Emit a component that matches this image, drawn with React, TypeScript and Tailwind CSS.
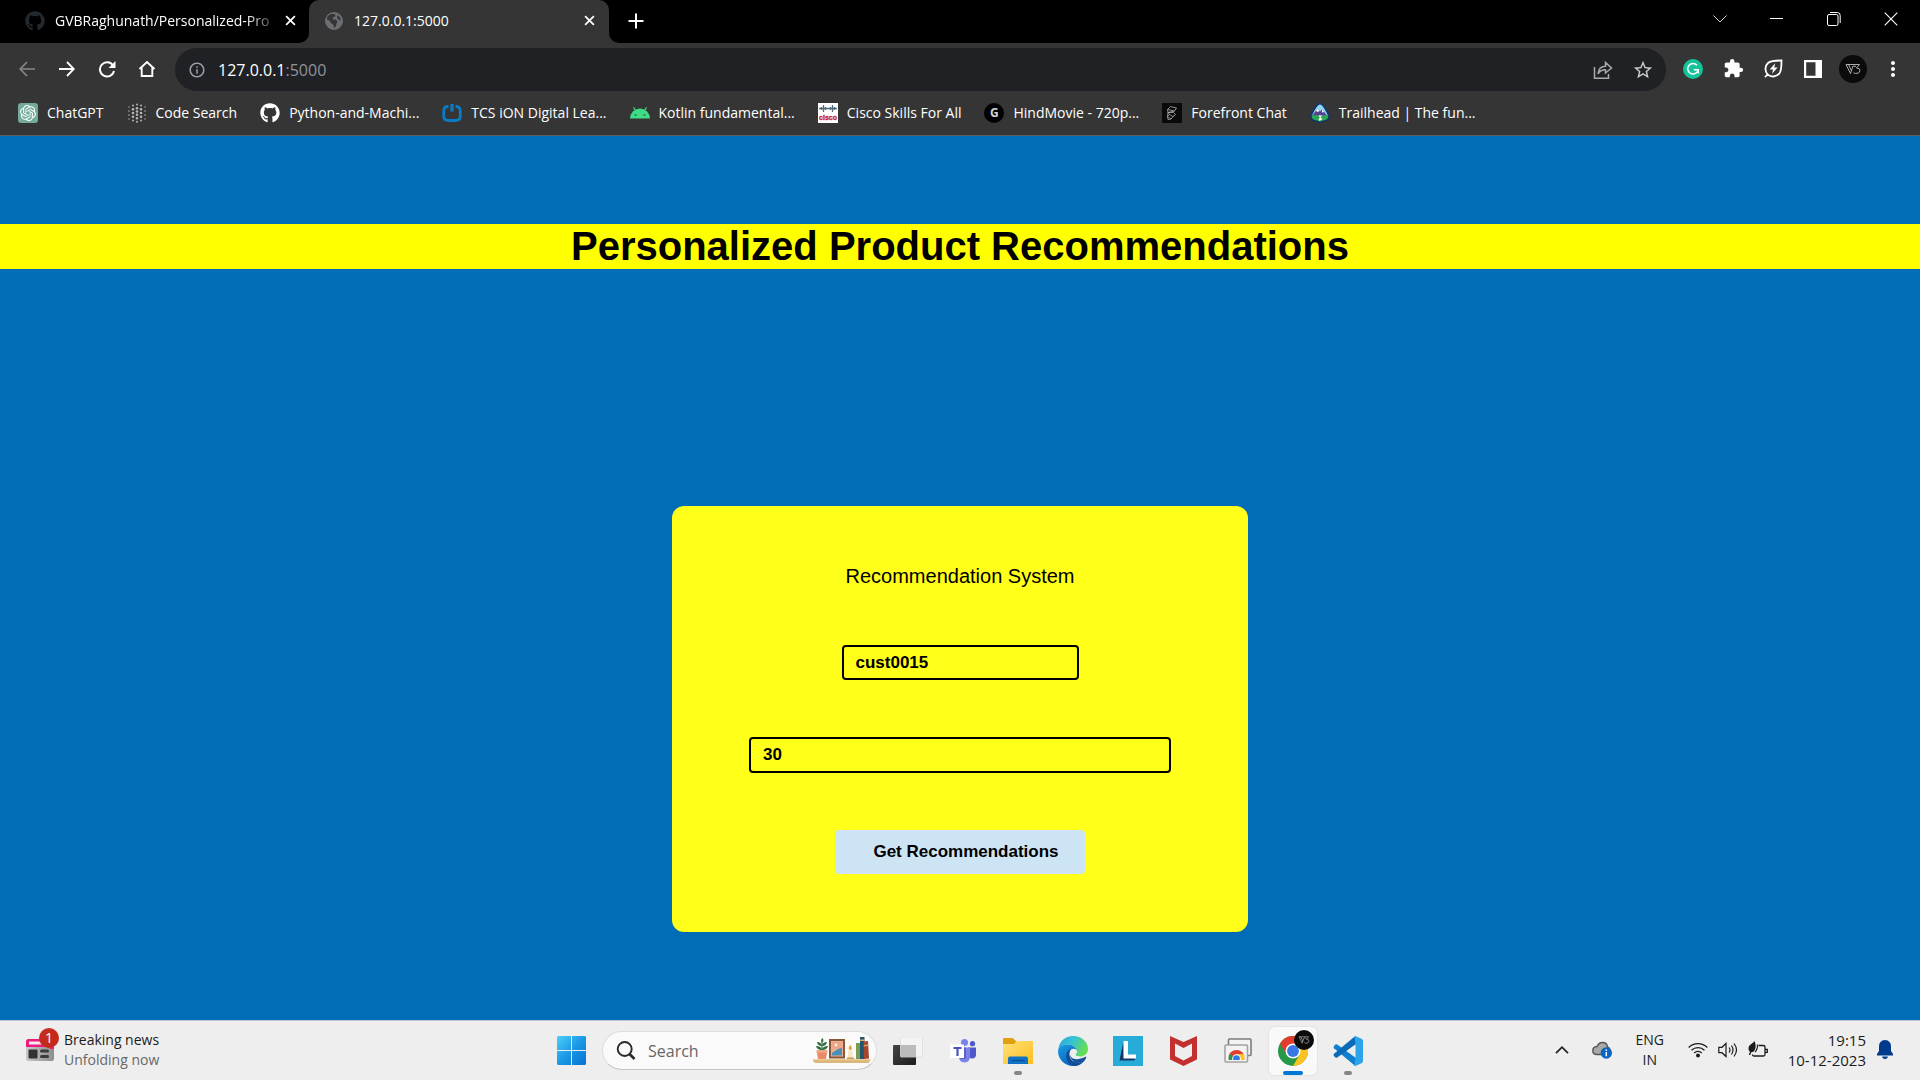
import type { ReactNode } from "react";
import { FaGithub } from "react-icons/fa";
import { SiOpenai } from "react-icons/si";
import { MdExtension, MdInfoOutline, MdStarBorder, MdMoreVert } from "react-icons/md";

const UI = "font-['Open_Sans','Noto_Sans',sans-serif]";

function Globe() {
  return (
    <svg viewBox="0 0 18 18" className="size-[18px] shrink-0" aria-hidden="true">
      <circle cx="9" cy="9" r="9" fill="#6b6f73" />
      <path d="M2 5.500C3 3.500 5 2 7.500 1.800L10.500 2.500 10 4.500 8 5.500 7.500 7.500H11L12.500 9.500 11.500 11.500 11 14 9 16.200 8.500 13 6 11 4.500 8.500 2 7.500zM12.500 3 15 5.500 16 8.500 14 8 12 6z" fill="#353535" />
    </svg>
  );
}

function CloseX({ className }: { className: string }) {
  return (
    <svg viewBox="0 0 10 10" className={className} aria-hidden="true">
      <path d="M1 1 9 9M9 1 1 9" stroke="currentColor" strokeWidth="1.6" fill="none" />
    </svg>
  );
}

function TabStrip() {
  return (
    <div className="flex h-[43px] bg-black text-white">
      <div className="flex w-[309px] items-center pb-0.5 pl-[25px] pr-[9px]">
        <FaGithub className="size-5 shrink-0 text-[#24292e]" aria-hidden="true" />
        <span className="ml-[10px] flex-1 whitespace-nowrap text-sm [mask-image:linear-gradient(to_right,black_85%,transparent)]">
          GVBRaghunath/Personalized-Pro
        </span>
        <button aria-label="Close tab" className="flex size-5 shrink-0 items-center justify-center">
          <CloseX className="size-[11px]" />
        </button>
      </div>
      <div className="relative flex w-[300px] items-center rounded-t-[10px] bg-[#353535] pb-0.5 pl-4 pr-[10px]">
        <svg viewBox="0 0 10 10" className="absolute -left-[10px] bottom-0 size-[10px]" aria-hidden="true">
          <path d="M10 0V10H0A10 10 0 0 0 10 0z" fill="#353535" />
        </svg>
        <svg viewBox="0 0 10 10" className="absolute -right-[10px] bottom-0 size-[10px]" aria-hidden="true">
          <path d="M0 0V10H10A10 10 0 0 1 0 0z" fill="#353535" />
        </svg>
        <Globe />
        <span className="ml-[11px] flex-1 text-sm">127.0.0.1:5000</span>
        <button aria-label="Close tab" className="flex size-5 items-center justify-center">
          <CloseX className="size-[11px]" />
        </button>
      </div>
      <button aria-label="New tab" className="ml-3 flex w-[30px] items-center justify-center pb-0.5">
        <svg viewBox="0 0 16 16" className="size-4" aria-hidden="true">
          <path d="M8 .5v15M.5 8h15" stroke="white" strokeWidth="2" />
        </svg>
      </button>
      <div className="ml-auto flex h-[37px] pr-px">
        <button aria-label="Search tabs" className="flex w-[57px] items-center justify-center">
          <svg viewBox="0 0 14 8" className="h-2 w-[14px]" aria-hidden="true">
            <path d="M.5.500 7 7 13.500.500" stroke="#d0d0d0" fill="none" />
          </svg>
        </button>
        <button aria-label="Minimize" className="flex w-[57px] items-center justify-center">
          <span className="h-px w-[13px] bg-white" />
        </button>
        <button aria-label="Restore" className="flex w-[57px] items-center justify-center">
          <svg viewBox="0 0 14 14" className="size-[14px]" fill="none" stroke="white" aria-hidden="true">
            <rect x=".5" y="2.500" width="10.500" height="11" rx="1.500" />
            <path d="M3 .5H10.500Q13.200.500 13.200 3.500V11" />
          </svg>
        </button>
        <button aria-label="Close" className="flex w-[57px] items-center justify-center">
          <svg viewBox="0 0 14 14" className="size-[14px]" aria-hidden="true">
            <path d="M.7.7 13.300 13.300M13.300.7.7 13.300" stroke="white" strokeWidth="1.1" />
          </svg>
        </button>
      </div>
    </div>
  );
}

function ToolButton({ label, children }: { label: string; children: ReactNode }) {
  return (
    <button aria-label={label} className="flex h-10 w-10 shrink-0 items-center justify-center text-white">
      {children}
    </button>
  );
}

function Monogram({ className }: { className: string }) {
  return (
    <svg viewBox="0 0 28 28" className={className} aria-hidden="true">
      <circle cx="14" cy="14" r="14" fill="#0b0b0b" />
      <path d="M7 9.500 11.500 18.500 14 11M9.500 9.500 12.300 15.500M7 9.500H20.500L17.500 13Q21.200 13 21 15.800 20.500 18.700 16.500 18.500L14.500 17.800M14 11 17 11.500" fill="none" stroke="#bdbdbd" strokeWidth=".9" />
    </svg>
  );
}

function Toolbar() {
  return (
    <div className="flex items-center pl-[7px] pr-[7px] pt-[5px]">
      <div className="flex pb-0.5">
        <ToolButton label="Back">
          <svg viewBox="0 0 16 16" className="size-4" fill="none" stroke="#868686" strokeWidth="1.700" aria-hidden="true">
            <path d="M16 8H1.500M8 1 1.200 8 8 15" />
          </svg>
        </ToolButton>
        <ToolButton label="Forward">
          <svg viewBox="0 0 16 16" className="size-4" fill="none" stroke="white" strokeWidth="1.800" aria-hidden="true">
            <path d="M0 8H14.500M8 1 14.800 8 8 15" />
          </svg>
        </ToolButton>
        <ToolButton label="Reload">
          <svg viewBox="0 0 18 18" className="size-[18px]" aria-hidden="true">
            <path d="M15 5.500A7.100 7.100 0 1 0 16 11" fill="none" stroke="white" strokeWidth="2" />
            <path d="M17.500 1V8H10.500z" fill="white" />
          </svg>
        </ToolButton>
        <ToolButton label="Home">
          <svg viewBox="0 0 18 18" className="size-[18px]" fill="none" stroke="white" strokeWidth="1.900" aria-hidden="true">
            <path d="M1.500 9 9 2 16.500 9M3.700 7.500V16H14.300V7.500" />
          </svg>
        </ToolButton>
      </div>
      <div className="ml-2 flex h-[43px] flex-1 items-center rounded-full bg-[#202124] pl-[13px] pr-[3px]">
        <MdInfoOutline className="size-[18px] text-[#9aa0a6]" aria-hidden="true" />
        <span className="ml-3 flex-1 text-base text-white">
          127.0.0.1<span className="text-[#8f9499]">:5000</span>
        </span>
        <ToolButton label="Share this page">
          <svg viewBox="0 0 20 20" className="size-5" fill="none" stroke="#a8abae" strokeWidth="1.500" aria-hidden="true">
            <path d="M1.500 7V18.200H15.500V14M5 14C5.500 9 8.500 6.200 12.500 6.200V2.500L18.500 8 12.500 13V9.800C9 9.800 6.500 11 5 14z" />
          </svg>
        </ToolButton>
        <ToolButton label="Bookmark this tab">
          <MdStarBorder className="size-[22px] text-[#c8cacc]" />
        </ToolButton>
      </div>
      <div className="ml-[7px] flex pb-0.5">
        <ToolButton label="Grammarly">
          <svg viewBox="0 0 20 20" className="size-5" aria-hidden="true">
            <circle cx="10" cy="10" r="10" fill="#15c39a" />
            <path d="M14 6.200A5.300 5.300 0 1 0 14.800 12M10.800 10.700H15.200V14.500" fill="none" stroke="white" strokeWidth="1.500" />
          </svg>
        </ToolButton>
        <ToolButton label="Extensions">
          <MdExtension className="size-[21px]" />
        </ToolButton>
        <ToolButton label="Energy saver">
          <svg viewBox="0 0 20 20" className="size-[19px]" fill="none" stroke="white" strokeWidth="1.900" aria-hidden="true">
            <path d="M1 19 3.800 16.200C.5 12.500 1 7 4.500 4 7.500 1.500 13 1.600 18.400 1.600 18.400 7 18.600 12.500 16 15.500 12.800 19 7.500 19.500 3.800 16.200" />
            <path d="M11.800 4.500 6 11H9.500L8.500 15.500 14.300 9H10.800z" fill="white" stroke="none" />
          </svg>
        </ToolButton>
        <ToolButton label="Side panel">
          <svg viewBox="0 0 18 18" className="size-[18px]" aria-hidden="true">
            <path d="M0 0H18V18H0zM2.200 2.200V15.800H11.500V2.200z" fill="white" fillRule="evenodd" />
          </svg>
        </ToolButton>
        <ToolButton label="Profile">
          <Monogram className="size-7" />
        </ToolButton>
        <ToolButton label="Menu">
          <MdMoreVert className="size-6" />
        </ToolButton>
      </div>
    </div>
  );
}

const DOTS = [
  [10, 1.5, 1], [6, 2.5, 1], [14, 2.5, 1], [2, 4, 0.7], [18, 4, 0.7], [10, 5.2, 1.3], [6, 6.2, 1.3], [14, 6.2, 1.3],
  [2, 8, 0.8], [18, 8, 0.8], [10, 8.5, 1.3], [6, 10, 1.3], [14, 10, 1.3], [2, 12, 0.8], [18, 12, 0.8], [10, 11.8, 1.3],
  [6, 13.8, 1.3], [14, 13.8, 1.3], [2, 16, 0.7], [18, 16, 0.7], [10, 15.2, 1.2], [6, 17.5, 1], [14, 17.5, 1], [10, 18.7, 1],
];

const BOOKMARKS: { label: string; icon: ReactNode }[] = [
  {
    label: "ChatGPT",
    icon: (
      <span className="flex size-5 items-center justify-center rounded-[3px] bg-[#74aa9c]">
        <SiOpenai className="size-4 text-white" />
      </span>
    ),
  },
  {
    label: "Code Search",
    icon: (
      <svg viewBox="0 0 20 20" className="size-5" fill="#b5b5b5">
        {DOTS.map(([x, y, r]) => (
          <circle key={`${x}-${y}`} cx={x} cy={y} r={r} />
        ))}
      </svg>
    ),
  },
  { label: "Python-and-Machi...", icon: <FaGithub className="size-5 text-white" /> },
  {
    label: "TCS iON Digital Lea...",
    icon: (
      <svg viewBox="0 0 20 20" className="size-5" fill="none" stroke="#0a7ac4" strokeWidth="2.800">
        <path d="M6.500 3.500H5.500Q1.700 4 1.700 8V13Q1.700 17.500 6.500 17.500H13.500Q18.300 17.500 18.300 13V8Q18.300 4 14.500 3.500H13.500" />
        <path d="M10 1V8.500" strokeWidth="3.200" />
      </svg>
    ),
  },
  {
    label: "Kotlin fundamental...",
    icon: (
      <svg viewBox="0 0 20 20" className="size-5">
        <path d="M0 15.500A10 10 0 0 1 20 15.500z" fill="#3ddc84" />
        <path d="M3.500 4.200 6 8.500M16.500 4.200 14 8.500" stroke="#3ddc84" strokeWidth="1.200" />
        <circle cx="5.500" cy="12" r="1" fill="#2b6b48" />
        <circle cx="14.500" cy="12" r="1" fill="#2b6b48" />
      </svg>
    ),
  },
  {
    label: "Cisco Skills For All",
    icon: (
      <svg viewBox="0 0 20 20" className="size-5 bg-white">
        <path d="M1 5.500H19M3.500 4V7M5.500 2V9M7.500 4V7M12.500 4V7M14.500 2V9M16.500 4V7" stroke="#4f6b78" strokeWidth="1.300" />
        <text x="10" y="17" textAnchor="middle" fontSize="7" fontWeight="bold" fill="#c4202f" stroke="#c4202f" strokeWidth=".3" fontFamily="Liberation Sans">cisco</text>
      </svg>
    ),
  },
  {
    label: "HindMovie - 720p...",
    icon: (
      <span className="flex size-5 items-center justify-center rounded-full bg-black text-xs font-bold text-[#d5d5d5]">G</span>
    ),
  },
  {
    label: "Forefront Chat",
    icon: (
      <svg viewBox="0 0 20 20" className="size-5">
        <path d="M0 0H20V20H0z" fill="#0a0a0a" />
        <path d="M5.500 6.500 8.500 3.500 14.500 5 12.500 8 8 7zM5.500 6.500 6 9.500 12.500 8M6 9.500 11.500 9.500 13.500 11.500 11 13.500 7.500 11.500zM6 9.500 5.500 13.500 9 16 11 13.500M5.500 13.500 7.500 11.500M9 16 6 16.500 5.500 13.500" fill="none" stroke="#b0b0b0" strokeWidth=".8" />
      </svg>
    ),
  },
  {
    label: "Trailhead | The fun...",
    icon: (
      <svg viewBox="0 0 20 20" className="size-5">
        <path d="M10 0C12.500 .3 13.800 2 15.500 4.500L19.300 11C20.800 14.500 19.500 16.800 17 17.800L10 20 3 17.800C.5 16.800-.8 14.500 .7 11L4.500 4.500C6.200 2 7.500 .3 10 0z" fill="#10346b" />
        <path d="M10 1.600C12.500 2 14 5 18 12.500H2C6 5 7.500 2 10 1.600z" fill="#8fd3f5" />
        <path d="M2.500 12.500 7.500 5.500 10 8.500 12 6.500 17 12.500z" fill="#5a3f90" />
        <path d="M7.500 5.500 9.200 8 7.800 9 6 8zM12 6.500 14 9 12 9.500z" fill="white" />
        <path d="M1.500 12.500H18.500Q18.500 15.500 16.500 16.500L10 18.500 3.500 16.500Q1.500 15.500 1.500 12.500z" fill="#2aa84f" />
        <path d="M8.500 12.500H12L10.500 14.500 12.500 16 9.500 18 8.500 16 10 15z" fill="white" />
      </svg>
    ),
  },
];

function BookmarkBar() {
  return (
    <nav aria-label="Bookmarks" className="flex h-11 items-center gap-[23px] pl-[18px] text-sm text-white">
      {BOOKMARKS.map((b) => (
        <a key={b.label} href="#" className="flex items-center gap-[9px] whitespace-nowrap">
          <span className="flex size-5 shrink-0" aria-hidden="true">{b.icon}</span>
          {b.label}
        </a>
      ))}
    </nav>
  );
}

function RecommendationPage() {
  return (
    <main className="flex flex-1 flex-col bg-[#006db6] pt-[88px] font-['Liberation_Sans',Arial,sans-serif] text-black">
      <h1 className="bg-[#ffff00] text-center text-[40px] font-bold leading-[45px]">Personalized Product Recommendations</h1>
      <form
        className="mx-auto mb-[88px] mt-auto flex w-[30%] flex-col items-center gap-[57px] rounded-xl bg-[#ffff1a] px-[77px] pb-[58px] pt-[58px]"
        onSubmit={(e) => e.preventDefault()}
      >
        <h2 className="text-xl leading-6">Recommendation System</h2>
        <input
          aria-label="Customer ID"
          type="text"
          defaultValue="cust0015"
          className="h-[35px] w-[237px] rounded border-2 border-black bg-transparent px-3 text-[17px] font-bold"
        />
        <input
          aria-label="Number of recommendations"
          type="text"
          defaultValue="30"
          className="h-9 w-full rounded border-2 border-black bg-transparent px-3 text-[17px] font-bold"
        />
        <button type="submit" className="h-11 whitespace-nowrap rounded bg-[#cde4f4] pl-[38px] pr-[26px] text-[17px] font-bold">
          Get Recommendations
        </button>
      </form>
    </main>
  );
}

function TaskButton({ label, active, running, children }: { label: string; active?: boolean; running?: boolean; children: ReactNode }) {
  return (
    <button
      aria-label={label}
      className={`relative flex size-12 shrink-0 items-center justify-center rounded-md ${active ? "bg-[#f9f9f9] shadow-[0_0_1px_1px_#e4e4e4]" : ""}`}
    >
      {children}
      {running && <span className="absolute bottom-0 h-1 w-2 rounded-full bg-[#868686]" />}
      {active && <span className="absolute bottom-0 h-1 w-5 rounded-full bg-[#0078d4]" />}
    </button>
  );
}

function Shelf() {
  return (
    <svg viewBox="0 0 60 28" className="h-7 w-[60px] shrink-0" aria-hidden="true">
      <path d="M1 22H59L57 25.500Q56.500 26 55 26H4Q1 26 1 22z" fill="#dcb67a" />
      <path d="M1 22H59L58.300 23.300H1.200z" fill="#edcd97" />
      <path d="M10 14V4" stroke="#2c5b34" strokeWidth="1" />
      <path d="M10 13C6 13 4.500 11 4 9 7.500 9 9.500 10 10 13zM10 13C14 13 15.500 11 16 9 12.500 9 10.500 10 10 13zM10 9C6.500 9 5.500 7 5 5 8 5 9.500 6 10 9zM10 9C13.500 9 14.500 7 15 5 12 5 10.500 6 10 9zM10 5.500C8.500 4 9 2 10.500 1 12 3 11.500 4.500 10 5.500z" fill="#2f7040" />
      <path d="M5 13.500H15V16L14 22H6L5 16z" fill="#e98a6b" />
      <path d="M4.500 13.200H15.500V16H4.500z" fill="#f4a183" />
      <path d="M17 2H33V21.500H17z" fill="#8c5736" />
      <path d="M19 4H31V19.500H19z" fill="#e8b08f" />
      <path d="M20 5H30V12H20z" fill="#f0a58a" />
      <path d="M20 18.500V16L26 12 30 11V18.500z" fill="#4a8fb5" />
      <circle cx="24" cy="8" r="1.400" fill="#fff3c8" />
      <path d="M36 13.500H40.500V22H36z" fill="#f6e7c5" />
      <path d="M35 20.500H42V22H35z" fill="#c99a55" />
      <path d="M38.200 8C40.500 10.500 40 13 38.300 13 36.500 13 36.200 10.500 38.200 8z" fill="#f59b23" />
      <path d="M44 6H48.500V22H44z" fill="#7b9a55" />
      <path d="M48 0H52.500V22H48z" fill="#1f5670" />
      <path d="M48 2.500H52.500V4H48z" fill="#e0b060" />
      <path d="M51.500 4.500 56 4 57 21.500 52 22z" fill="#a8452f" />
      <path d="M51.700 8 56 7.500V9L51.800 9.500z" fill="#e0a060" />
    </svg>
  );
}

function ChromeLogo({ className }: { className: string }) {
  return (
    <svg viewBox="0 0 48 48" className={className} aria-hidden="true">
      <circle cx="24" cy="24" r="24" fill="#279847" />
      <path d="M34.400 30 24 48A24 24 0 0 0 44.785 12H24z" fill="#fcc31f" />
      <path d="M13.600 30 3.215 12A24 24 0 0 1 44.785 12H24z" fill="#e33b2e" />
      <circle cx="24" cy="24" r="12" fill="white" />
      <circle cx="24" cy="24" r="9.500" fill="#3778e4" />
    </svg>
  );
}

function EdgeLogo() {
  return (
    <svg viewBox="0 0 30 30" className="size-[30px]" aria-hidden="true">
      <defs>
        <linearGradient id="edge-top" x1="0" y1="0" x2="1" y2=".4">
          <stop offset="0" stopColor="#2aa5e0" />
          <stop offset=".5" stopColor="#36c3d2" />
          <stop offset="1" stopColor="#66dd55" />
        </linearGradient>
        <linearGradient id="edge-left" x1="0" y1="0" x2=".6" y2="1">
          <stop offset="0" stopColor="#1b9de2" />
          <stop offset="1" stopColor="#0b63bf" />
        </linearGradient>
      </defs>
      <path d="M.4 13.500C1 5.500 7 0 15 0 24 0 30 6 30 13 30 18 26 20.500 22 20.500 19 20.500 17.200 19.500 17.500 18.500 18.500 17.300 18.800 16.500 18.800 15 18.500 11.500 14.500 8.500 9.500 8.500 5.500 8.500 2 10.500.4 13.500z" fill="url(#edge-top)" />
      <path d="M0 15C.5 11 5 8.300 9.500 8.500 14.500 8.700 18.600 11.500 18.800 15 17.500 12 13 12 11.500 16 10 21 14 28 19 29.300 10 32 0 25.500 0 15z" fill="url(#edge-left)" />
      <path d="M13 13C9.500 17 11 27 21 26.500 24 26.300 26 25 27.500 23.200 24.500 28 20 30 16 30 9 29 6.500 20 9.500 15.500 10.500 14 11.800 13.200 13 13z" fill="#114d94" />
      <path d="M11.700 18C13 23 18 25.500 28 20.500 28.500 21 28 22.500 27.500 23.200 24 28.500 13 29 11.700 18z" fill="#13529f" />
      <path d="M14.500 13.200Q18 12.500 18.800 15C18.800 16.500 18.500 17.300 17.500 18.500 17.200 19.500 19 20.500 22 20.500 17 22.500 11.500 18.500 12.300 15.300Q13 13.800 14.500 13.200z" fill="#ededed" />
    </svg>
  );
}

function Taskbar() {
  return (
    <footer className="grid h-[60px] grid-cols-[1fr_auto_1fr] items-center border-t border-[#b9c6d0] bg-[#eeeeee] text-[#1b1b1b]">
      <button className="ml-[26px] flex items-center gap-[10px] justify-self-start pb-0.5 text-left">
        <span className="relative">
          <svg viewBox="0 0 28 22" className="h-[22px] w-7" aria-hidden="true">
            <defs>
              <linearGradient id="news-body" x1="0" y1="0" x2="1" y2="0">
                <stop offset="0" stopColor="#c9c9c9" />
                <stop offset="1" stopColor="#8d8d8d" />
              </linearGradient>
            </defs>
            <rect width="28" height="22" rx="2.500" fill="url(#news-body)" />
            <path d="M0 8V2.500Q0 0 2.500 0H25.500Q28 0 28 2.500V10H24V8z" fill="#ee1d7d" />
            <rect x="3" y="2.500" width="16" height="3" fill="#f7e9f0" />
            <rect x="2.500" y="10.500" width="9" height="9" rx="1" fill="#333" />
            <rect x="14" y="10.500" width="9" height="3" rx="1.500" fill="#3a3a3a" />
            <rect x="14" y="16" width="9" height="3" rx="1.500" fill="#3a3a3a" />
          </svg>
          <span className="absolute -right-[5px] -top-[11px] flex size-5 items-center justify-center rounded-full bg-[#c42b1c] text-sm leading-none text-white">1</span>
        </span>
        <span className="flex flex-col text-sm leading-5">
          <span>Breaking news</span>
          <span className="text-[#686868]">Unfolding now</span>
        </span>
      </button>

      <div className="flex items-center gap-[7px] pr-px">
        <TaskButton label="Start">
          <svg viewBox="0 0 29 29" className="size-[29px]" aria-hidden="true">
            <defs>
              <linearGradient id="win" x1="0" y1="0" x2="1" y2="1">
                <stop offset="0" stopColor="#4bd0fb" />
                <stop offset=".5" stopColor="#1c98e6" />
                <stop offset="1" stopColor="#0672d0" />
              </linearGradient>
            </defs>
            <path d="M1 0H14V14H0V1zM15 0H28L29 1V14H15zM0 15H14V29H1L0 28zM15 15H29V28L28 29H15z" fill="url(#win)" />
          </svg>
        </TaskButton>
        <label className="flex h-[39px] w-[275px] items-center rounded-full border border-b-[#c4c4c4] border-[#dedede] bg-[#fafafa] pl-[13px] pr-1">
          <svg viewBox="0 0 20 20" className="size-5 shrink-0" fill="none" stroke="#2a2a2a" aria-hidden="true">
            <circle cx="8.700" cy="8" r="7" strokeWidth="1.900" />
            <path d="M13.500 13 18.500 18" strokeWidth="2.600" />
          </svg>
          <input type="text" aria-label="Search" placeholder="Search" className="ml-3 min-w-0 flex-1 bg-transparent text-base outline-none placeholder:text-[#666666]" />
          <Shelf />
        </label>
        <TaskButton label="Task view">
          <svg viewBox="0 0 30 28" className="h-7 w-[30px]" aria-hidden="true">
            <defs>
              <linearGradient id="tv" x1="0" y1="0" x2="1" y2="1">
                <stop offset="0" stopColor="#444" />
                <stop offset="1" stopColor="#1c1c1c" />
              </linearGradient>
            </defs>
            <rect y="8" width="23" height="20" rx="1" fill="url(#tv)" />
            <rect x="7.500" width="22" height="20" rx="1" fill="#f4f4f4" stroke="#dcdcdc" strokeWidth=".8" />
            <path d="M7.500 8H23V20H7.500z" fill="#bcbcbc" />
          </svg>
        </TaskButton>
        <TaskButton label="Teams">
          <svg viewBox="0 0 26 24" className="h-6 w-[26px]" aria-hidden="true">
            <circle cx="14.500" cy="3.500" r="3.500" fill="#7b83eb" />
            <circle cx="22.500" cy="4.700" r="2.600" fill="#5059c9" />
            <path d="M18 8.500H26V15.500Q26 19.500 22 19.500 19 19.500 18 17z" fill="#5059c9" />
            <path d="M9 8.500H20V17Q20 23.500 14.500 23.500 9 23.500 9 17z" fill="#7b83eb" />
            <path d="M9 8.500H16V20H9.800Q9 18 9 17z" fill="#5b62c2" />
            <path d="M0 5.500H14V19H0z" fill="white" />
            <path d="M3.500 8H11.500V10H8.600V17H6.400V10H3.500z" fill="#4b53bc" />
          </svg>
        </TaskButton>
        <TaskButton label="File Explorer" running>
          <svg viewBox="0 0 30 26" className="h-[26px] w-[30px]" aria-hidden="true">
            <defs>
              <linearGradient id="fold" x1="0" y1="0" x2="1" y2="1">
                <stop offset="0" stopColor="#ffe07a" />
                <stop offset="1" stopColor="#fcc01e" />
              </linearGradient>
            </defs>
            <path d="M0 1Q0 0 1 0H9.500L13 3H29Q30 3 30 4V10H0z" fill="#e0a010" />
            <path d="M0 6H11L13.500 3H30V26H0z" fill="url(#fold)" />
            <path d="M5 26V20.500Q5 18.500 7 18.500H23Q25 18.500 25 20.500V26z" fill="#0f72c4" />
            <path d="M8.500 22.500H21.500" stroke="#0a4f90" strokeWidth="1.200" />
          </svg>
        </TaskButton>
        <TaskButton label="Edge">
          <EdgeLogo />
        </TaskButton>
        <TaskButton label="L">
          <svg viewBox="0 0 30 30" className="size-[30px]" aria-hidden="true">
            <path d="M0 0H30V30H0z" fill="#27abd9" />
            <path d="M10.500 5 6.500 24.500H21L23 22.500 11 21z" fill="#14366b" />
            <path d="M10.500 5H15V18.500H23V22.500H10.500z" fill="white" />
          </svg>
        </TaskButton>
        <TaskButton label="McAfee">
          <svg viewBox="0 0 27 30" className="h-[30px] w-[27px]" aria-hidden="true">
            <path d="M0 0 13.500 6 27 0V23.500L13.500 30 0 23.500zM5 7.500V20L13.500 24.500 22 20V7.500L13.500 12z" fill="#c4302e" fillRule="evenodd" />
          </svg>
        </TaskButton>
        <TaskButton label="Remote Desktop">
          <svg viewBox="0 0 28 25" className="h-[25px] w-7" fill="#f3f3f3" aria-hidden="true">
            <rect x="4.500" y="1" width="22.500" height="16.500" rx="1" stroke="#7c7c7c" strokeWidth="1.600" />
            <rect x="1" y="7" width="22.500" height="17" rx="1" stroke="#a3a3a3" strokeWidth="1.600" />
            <svg x="4.500" y="12" width="16" height="10" viewBox="0 0 48 30">
              <circle cx="24" cy="24" r="24" fill="#e33b2e" />
              <path d="M24 24 3.200 12A24 24 0 0 0 0 30H24z" fill="#279847" />
              <path d="M24 24V12H44.800A24 24 0 0 1 48 30H24z" fill="#fcc31f" />
              <circle cx="24" cy="26" r="13" fill="white" />
              <circle cx="24" cy="26" r="10" fill="#3778e4" />
            </svg>
          </svg>
        </TaskButton>
        <TaskButton label="Chrome" active>
          <ChromeLogo className="size-[30px]" />
          <Monogram className="absolute right-[3px] top-[3px] size-5" />
        </TaskButton>
        <TaskButton label="Visual Studio Code" running>
          <svg viewBox="0 0 30 30" className="size-[30px]" aria-hidden="true">
            <path d="M22.300 30 1 12.200Q0 11 1 9.900L2.400 8.600Q3.200 8 4.200 8.600L23 22z" fill="#0f7fcf" />
            <path d="M22.300 0 1 17.800Q0 19 1 20.100L2.400 21.400Q3.200 22 4.200 21.400L23 8z" fill="#0a6cb8" />
            <path d="M22.300 0 28.500 2.800Q30 3.500 30 5V25Q30 26.500 28.500 27.200L22.300 30Q21 30 20.800 28.500L22.500 27.500V2.500L20.800 1.500Q21 0 22.300 0z" fill="#2ba4ea" />
          </svg>
        </TaskButton>
      </div>

      <div className="flex items-center justify-self-end pb-0.5 pr-[27px] text-[15px] leading-5">
        <button aria-label="Show hidden icons" className="mr-[23px]">
          <svg viewBox="0 0 14 8" className="h-2 w-[14px]" fill="none" stroke="#222" strokeWidth="1.700" aria-hidden="true">
            <path d="M1 7.200 7 1.200 13 7.200" />
          </svg>
        </button>
        <svg viewBox="0 0 20 18" className="mr-[22px] h-[18px] w-5" aria-hidden="true">
          <path d="M5 13.500Q.8 13.500.8 9.500.8 6 5 5.500 7 1 11.500 1.500 15 2 15.500 6 18 7 18 10V13.500z" fill="#a9a9a9" stroke="#555" strokeWidth="1.400" />
          <circle cx="14.300" cy="12" r="5.700" fill="#0a66c2" />
          <path d="M14.300 11V15.300M14.300 8.500V10" stroke="white" strokeWidth="1.500" />
        </svg>
        <button className="mr-[22px] w-8 text-center text-sm leading-5">
          ENG
          <br />
          IN
        </button>
        <button aria-label="Network, volume and battery" className="mr-5 flex items-center gap-[10px]">
          <svg viewBox="0 0 20 16" className="h-4 w-5" fill="none" stroke="#1b1b1b" strokeWidth="1.300">
            <path d="M.7 5.500A13.200 13.200 0 0 1 19.300 5.500M3.500 8.300A9.300 9.300 0 0 1 16.500 8.300M6.200 11A5.400 5.400 0 0 1 13.800 11" />
            <circle cx="10" cy="13.500" r="1.300" fill="#1b1b1b" />
          </svg>
          <svg viewBox="0 0 20 16" className="h-4 w-5" fill="none" stroke="#1b1b1b" strokeWidth="1.200">
            <path d="M.8 5.300H4L8 1.500V14.500L4 10.700H.8zM11 5.500Q13 8 11 10.500M13.500 3.500Q16.500 8 13.500 12.500M16 1.500Q21 8 16 14.500" />
          </svg>
          <svg viewBox="0 0 20 17" className="h-[17px] w-5" fill="none" stroke="#1b1b1b" strokeWidth="1.300">
            <path d="M10.500 4.500H15.500Q17 4.500 17 6V13.500Q17 15 15.500 15H6Q4.500 15 4.500 13.500M17.500 8.300H19.300V11.300H17.500" />
            <path d="M6.500 0C5.500 2.500 1 3 .5 7 .4 8.800 1 10 2 10.700L.8 14H2.200L3.300 11.200C7.500 11 8.800 5.500 6.500 0z" fill="#1b1b1b" stroke="none" />
            <path d="M9.300 3.500Q10 8 7 11" strokeWidth="1.100" />
          </svg>
        </button>
        <button className="text-right">
          19:15
          <br />
          10-12-2023
        </button>
        <button aria-label="Notifications" className="ml-[11px]">
          <svg viewBox="0 0 16 19" className="h-[19px] w-4" fill="#003a8c">
            <path d="M8 0Q14 .5 14 6.500V11L16 14V15.500H0V14L2 11V6.500Q2 .5 8 0zM5 16.500H11Q10.500 19 8 19 5.500 19 5 16.500z" />
          </svg>
        </button>
      </div>
    </footer>
  );
}

export default function App() {
  return (
    <div className={`flex min-h-screen flex-col ${UI}`}>
      <header className="border-b border-[#5c5c5c] bg-[#353535]">
        <TabStrip />
        <Toolbar />
        <BookmarkBar />
      </header>
      <RecommendationPage />
      <Taskbar />
    </div>
  );
}
